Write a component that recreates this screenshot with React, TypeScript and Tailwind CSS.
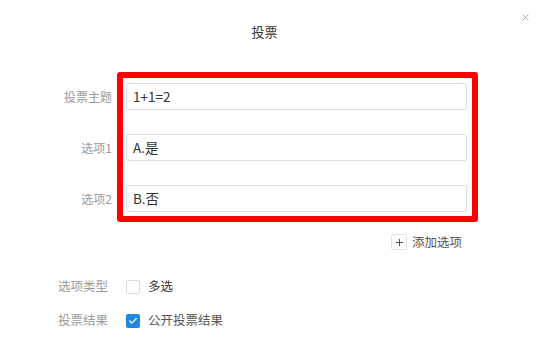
import { Check, Plus, X } from "lucide-react"

const fields = [
  { label: "投票主题", value: "1+1=2" },
  { label: "选项1", value: "A.是" },
  { label: "选项2", value: "B.否" },
]

export default function App() {
  return (
    <div className="relative w-[555px] h-[360px] bg-white font-['Noto_Sans_CJK_SC',sans-serif] text-[#333]">
      {/* 关闭按钮 */}
      <button className="absolute top-[12px] right-[24px] text-[#9e9e9e]">
        <X className="w-[11px] h-[11px]" strokeWidth={1.6} />
      </button>

      {/* 标题 */}
      <div className="pt-[24px] pr-[26px] text-center text-[13px] leading-[16px]">投票</div>

      {/* 表单 */}
      <div className="flex mt-[32px]">
        <div className="w-[112px] pt-[11px] flex flex-col gap-[24px]">
          {fields.map((f) => (
            <div key={f.label} className="h-[27px] flex items-center justify-end text-[12px] text-[#9b9b9b]">
              {f.label}
            </div>
          ))}
        </div>
        <div className="ml-[5px] w-[361px] border-[6px] border-[#ff0000] rounded-[3px] pl-[3px] pr-[5px] pt-[5px] pb-[4px] flex flex-col gap-[24px]">
          {fields.map((f) => (
            <div
              key={f.label}
              className="h-[27px] flex items-center px-[6px] border border-[#dcdfe6] rounded-[2px] text-[13.5px] text-[#333]"
            >
              {f.value}
            </div>
          ))}
        </div>
      </div>

      {/* 添加选项 */}
      <div className="mt-[11px] pl-[391px] flex items-center gap-[5px]">
        <span className="w-[16px] h-[16px] border border-[#e3e3e3] rounded-[2px] flex items-center justify-center text-[#444]">
          <Plus className="w-[11px] h-[11px]" strokeWidth={2} />
        </span>
        <span className="text-[12.5px] text-[#555]">添加选项</span>
      </div>

      {/* 其他设置 */}
      <div className="mt-[25px] pl-[58px] flex flex-col gap-[14px]">
        <div className="h-[20px] flex items-center">
          <span className="w-[68px] text-[12.5px] text-[#9b9b9b]">选项类型</span>
          <span className="w-[14px] h-[14px] border border-[#dcdcdc] rounded-[2px]" />
          <span className="ml-[8px] text-[12.5px] text-[#333]">多选</span>
        </div>
        <div className="h-[20px] flex items-center">
          <span className="w-[68px] text-[12.5px] text-[#9b9b9b]">投票结果</span>
          <span className="w-[14px] h-[14px] rounded-[2px] bg-[#1e88e5] flex items-center justify-center text-white">
            <Check className="w-[10px] h-[10px]" strokeWidth={3} />
          </span>
          <span className="ml-[8px] text-[12.5px] text-[#555]">公开投票结果</span>
        </div>
      </div>
    </div>
  )
}
